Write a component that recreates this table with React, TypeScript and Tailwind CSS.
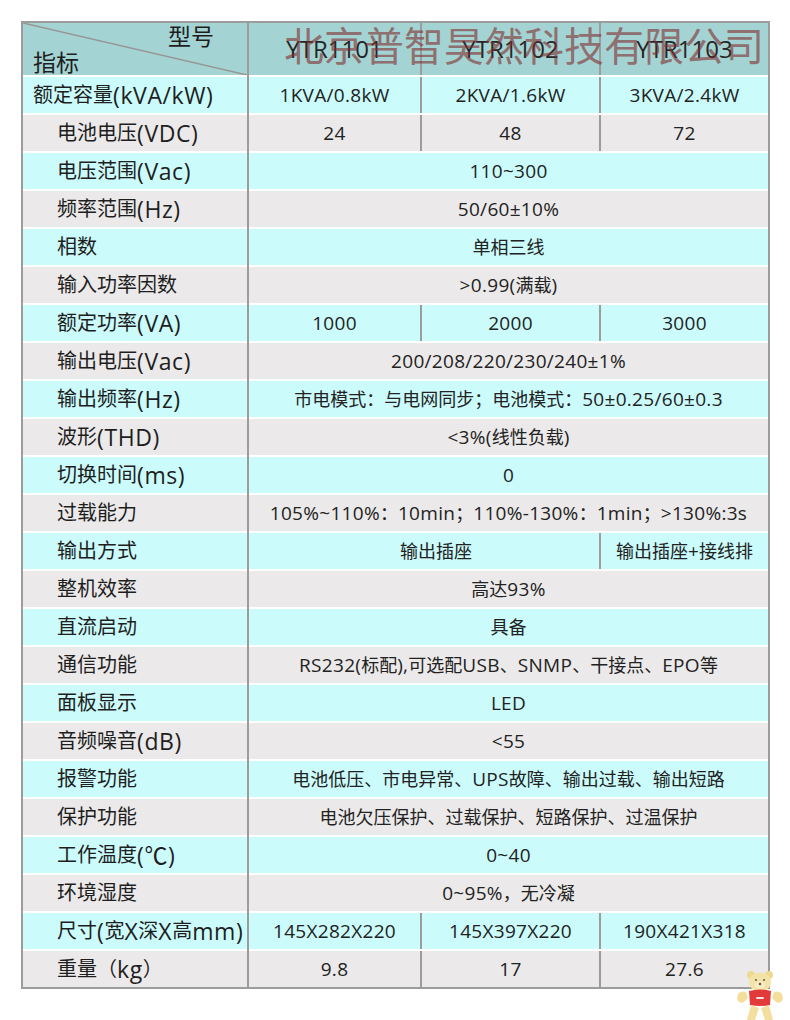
import React from 'react';

type Row = { label: string; cells: string[]; first?: boolean };

const rows: Row[] = [
  { label: '额定容量(kVA/kW)', first: true, cells: ['1KVA/0.8kW', '2KVA/1.6kW', '3KVA/2.4kW'] },
  { label: '电池电压(VDC)', cells: ['24', '48', '72'] },
  { label: '电压范围(Vac)', cells: ['110~300'] },
  { label: '频率范围(Hz)', cells: ['50/60±10%'] },
  { label: '相数', cells: ['单相三线'] },
  { label: '输入功率因数', cells: ['>0.99(满载)'] },
  { label: '额定功率(VA)', cells: ['1000', '2000', '3000'] },
  { label: '输出电压(Vac)', cells: ['200/208/220/230/240±1%'] },
  { label: '输出频率(Hz)', cells: ['市电模式：与电网同步；电池模式：50±0.25/60±0.3'] },
  { label: '波形(THD)', cells: ['<3%(线性负载)'] },
  { label: '切换时间(ms)', cells: ['0'] },
  { label: '过载能力', cells: ['105%~110%：10min；110%-130%：1min；>130%:3s'] },
  { label: '输出方式', cells: ['输出插座', '输出插座+接线排'] },
  { label: '整机效率', cells: ['高达93%'] },
  { label: '直流启动', cells: ['具备'] },
  { label: '通信功能', cells: ['RS232(标配),可选配USB、SNMP、干接点、EPO等'] },
  { label: '面板显示', cells: ['LED'] },
  { label: '音频噪音(dB)', cells: ['<55'] },
  { label: '报警功能', cells: ['电池低压、市电异常、UPS故障、输出过载、输出短路'] },
  { label: '保护功能', cells: ['电池欠压保护、过载保护、短路保护、过温保护'] },
  { label: '工作温度(℃)', cells: ['0~40'] },
  { label: '环境湿度', cells: ['0~95%，无冷凝'] },
  { label: '尺寸(宽X深X高mm)', cells: ['145X282X220', '145X397X220', '190X421X318'] },
  { label: '重量（kg）', cells: ['9.8', '17', '27.6'] },
];

// split text into CJK / latin runs so each can get its own size
function Mixed({ text, cjk, latin }: { text: string; cjk: string; latin: string }) {
  const runs: { c: boolean; t: string }[] = [];
  for (const ch of text) {
    const c = /[\u2E80-\u9FFF\u3000-\u303F\uFF00-\uFFEF]/.test(ch);
    const last = runs[runs.length - 1];
    if (last && last.c === c) last.t += ch;
    else runs.push({ c, t: ch });
  }
  return (
    <>
      {runs.map((r, i) => (
        <span key={i} className={r.c ? cjk : latin}>
          {r.t}
        </span>
      ))}
    </>
  );
}

function Value({ text }: { text: string }) {
  return <Mixed text={text} cjk="text-[18px]" latin="text-[19px] tracking-[0.3px]" />;
}

function Mascot() {
  return (
    <svg width="52" height="54" viewBox="0 0 52 54">
      <circle cx="17" cy="7" r="4" fill="#efd88f" />
      <circle cx="35" cy="7" r="4" fill="#efd88f" />
      <path d="M12 24 Q4 22 3 30 Q4 36 10 34 L14 30 Z" fill="#f2df9e" />
      <path d="M40 24 Q48 22 49 30 Q48 36 42 34 L38 30 Z" fill="#f2df9e" />
      <ellipse cx="26" cy="14" rx="11" ry="9.5" fill="#f4e3a8" />
      <ellipse cx="26" cy="17" rx="5" ry="3.5" fill="#f8edc6" />
      <circle cx="22" cy="12" r="1" fill="#6b5a3a" />
      <circle cx="30" cy="12" r="1" fill="#6b5a3a" />
      <circle cx="26" cy="16" r="1.3" fill="#7a5a3a" />
      <path d="M15 23 Q26 20 37 23 L36 37 Q26 39 16 37 Z" fill="#e23a3a" />
      <rect x="22" y="29" width="8" height="2" rx="1" fill="#ffffff" opacity="0.85" />
      <path d="M17 37 L13 52 L21 52 L25 40 Z" fill="#f2df9e" />
      <path d="M35 37 L39 52 L31 52 L27 40 Z" fill="#f2df9e" />
    </svg>
  );
}

export default function App() {
  return (
    <div className="relative w-[790px] h-[1020px] bg-white pt-[21px] pl-[21px] font-[family-name:'Open_Sans','Noto_Sans_CJK_SC',sans-serif] text-[#1e1e1e]">
      <div className="w-[749px] border-2 border-[#9c9c9c] bg-white">
        {/* header */}
        <div className="flex h-[52px] bg-[#a3d3d3]">
          <div className="relative w-[226px] shrink-0 border-r-2 border-[#9c9c9c] flex flex-col justify-between">
            <svg className="absolute inset-0" width="224" height="52" viewBox="0 0 224 52">
              <line x1="0" y1="0" x2="224" y2="52" stroke="#979797" strokeWidth="1.5" />
            </svg>
            <span className="relative self-end pr-[33px] text-[23px] leading-[26px]">型号</span>
            <span className="relative self-start pl-[10px] pb-[3px] text-[23px] leading-[26px]">指标</span>
          </div>
          <div className="w-[171px] flex items-center justify-center text-[24px] text-[#262626]">YTR1101</div>
          <div className="w-[179px] border-l-2 border-[#9c9c9c] flex items-center justify-center text-[24px] text-[#262626]">YTR1102</div>
          <div className="flex-1 border-l-2 border-[#9c9c9c] flex items-center justify-center text-[24px] text-[#262626]">YTR1103</div>
        </div>

        {rows.map((row, i) => {
          const bg = i % 2 === 0 ? 'bg-[#cbfbfb]' : 'bg-[#ebe9e9]';
          return (
            <div key={row.label} className="flex h-[38px]">
              <div className="w-[226px] shrink-0 border-r-2 border-[#9c9c9c] pt-[2px]">
                <div className={`h-full flex items-center whitespace-nowrap ${bg} ${row.first ? 'pl-[10px]' : 'pl-[34px]'}`}>
                  <Mixed text={row.label} cjk="text-[20px]" latin="text-[23px] tracking-[0.6px]" />
                </div>
              </div>
              <div className="flex-1 flex pt-[2px] text-[#222]">
                {row.cells.length === 3 && (
                  <>
                    <div className={`w-[171px] h-full flex items-center justify-center ${bg}`}><Value text={row.cells[0]} /></div>
                    <div className={`w-[179px] h-full flex items-center justify-center border-l-2 border-[#9c9c9c] ${bg}`}><Value text={row.cells[1]} /></div>
                    <div className={`flex-1 h-full flex items-center justify-center border-l-2 border-[#9c9c9c] ${bg}`}><Value text={row.cells[2]} /></div>
                  </>
                )}
                {row.cells.length === 2 && (
                  <>
                    <div className={`w-[350px] h-full flex items-center justify-center pl-[24px] ${bg}`}><Value text={row.cells[0]} /></div>
                    <div className={`flex-1 h-full flex items-center justify-center border-l-2 border-[#9c9c9c] ${bg}`}><Value text={row.cells[1]} /></div>
                  </>
                )}
                {row.cells.length === 1 && (
                  <div className={`flex-1 h-full flex items-center justify-center whitespace-nowrap ${bg}`}><Value text={row.cells[0]} /></div>
                )}
              </div>
            </div>
          );
        })}
      </div>

      {/* watermark */}
      <div className="absolute left-[284px] top-[24px] text-[40px] leading-none whitespace-nowrap font-[family-name:'Noto_Sans_CJK_SC',sans-serif] text-[rgba(130,45,45,0.62)]">
        北京普智昊然科技有限公司
      </div>

      <div className="absolute left-[734px] top-[968px]">
        <Mascot />
      </div>
    </div>
  );
}
